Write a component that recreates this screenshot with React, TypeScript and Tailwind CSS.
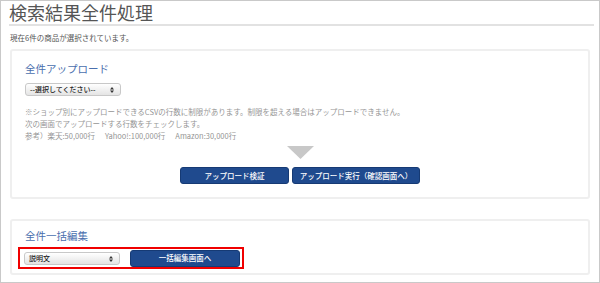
import React from 'react';

const font = { fontFamily: '"Noto Sans CJK JP", "Noto Sans", sans-serif' };

function SelectBox({ label }: { label: string }) {
  return (
    <div className="relative flex items-center w-[96px] h-[13px] rounded-[3px] border border-[#c8c8c8] bg-gradient-to-b from-white to-[#e4e4e4] pl-[4px] text-[7px] leading-none text-[#222] font-medium">
      <span>{label}</span>
      <svg width="4" height="6" viewBox="0 0 4 6" className="absolute right-[6px] top-[3px]">
        <path d="M0 2.4 L2 0 L4 2.4 Z M0 3.6 L2 6 L4 3.6 Z" fill="#333" />
      </svg>
    </div>
  );
}

function BlueButton({ children, width }: { children: React.ReactNode; width: string }) {
  return (
    <button
      className={`${width} h-[17px] rounded-[3px] bg-[#1f4a8e] border border-[#163a74] text-white text-[7.5px] font-medium leading-none`}
    >
      {children}
    </button>
  );
}

export default function App() {
  return (
    <div style={font} className="w-[600px] h-[283px] bg-white border border-[#c9c9c9] overflow-hidden">
      <h1 className="ml-[8px] mr-[5px] mt-0 pb-[1px] text-[18px] leading-[22px] text-[#555] border-b-2 border-[#e2e2e2] font-normal">
        検索結果全件処理
      </h1>
      <p className="ml-[9px] mt-[7px] text-[7.5px] leading-[10px] text-[#555]">現在6件の商品が選択されています。</p>

      <div className="mx-[9px] mt-[6px] h-[150px] border-2 border-[#efefef] rounded-[3px] px-[13px] pt-[11px]">
        <h2 className="text-[10.5px] leading-[14px] text-[#4a6fae]">全件アップロード</h2>
        <div className="mt-[7px]">
          <SelectBox label="--選択してください--" />
        </div>
        <div className="mt-[10px] text-[7.5px] leading-[12px] text-[#959595]">
          <p>※ショップ別にアップロードできるCSVの行数に制限があります。制限を超える場合はアップロードできません。</p>
          <p>次の画面でアップロードする行数をチェックします。</p>
          <p>
            参考）楽天:50,000行<span className="inline-block w-[10px]" />Yahoo!:100,000行
            <span className="inline-block w-[10px]" />Amazon:30,000行
          </p>
        </div>
        <div className="flex justify-center mt-[4px]">
          <svg width="27" height="13" viewBox="0 0 27 13">
            <path d="M0 0 H27 L13.5 13 Z" fill="#c8c8c8" />
          </svg>
        </div>
        <div className="flex justify-center gap-[3px] mt-[8px]">
          <BlueButton width="w-[109px]">アップロード検証</BlueButton>
          <BlueButton width="w-[128px]">アップロード実行（確認画面へ）</BlueButton>
        </div>
      </div>

      <div className="mx-[9px] mt-[20px] h-[56px] border-2 border-[#efefef] rounded-[3px] pl-[6px] pt-[8px]">
        <h2 className="ml-[7px] text-[10.5px] leading-[14px] text-[#4a6fae]">全件一括編集</h2>
        <div className="mt-[4px] w-[226px] h-[22px] border-2 border-[#f00000] flex items-center pl-[4px] gap-[10px]">
          <SelectBox label="説明文" />
          <BlueButton width="w-[110px]">一括編集画面へ</BlueButton>
        </div>
      </div>
    </div>
  );
}
